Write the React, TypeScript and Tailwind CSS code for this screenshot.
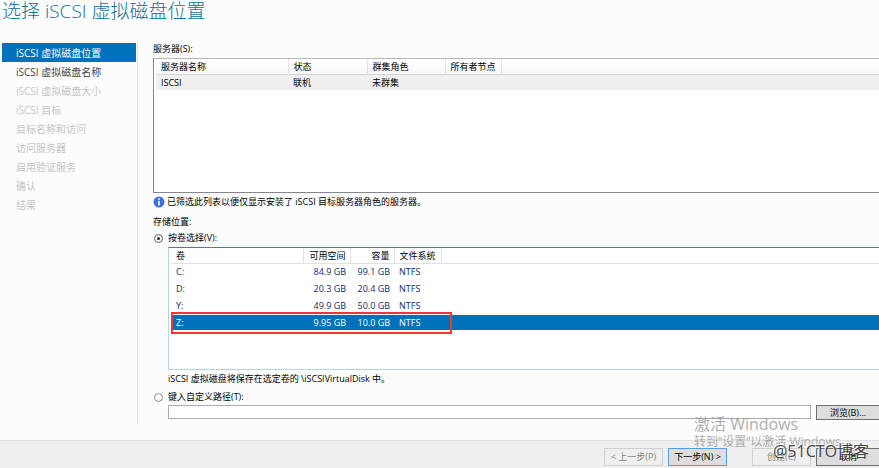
import clsx from "clsx";

interface ServerProps {
  name: string;
  status: string;
  role: string;
  owner: string;
}

interface VolumeProps {
  name: string;
  free: string;
  capacity: string;
  fileSystem: string;
}

const steps: string[] = [
  "iSCSI 虚拟磁盘位置",
  "iSCSI 虚拟磁盘名称",
  "iSCSI 虚拟磁盘大小",
  "iSCSI 目标",
  "目标名称和访问",
  "访问服务器",
  "启用验证服务",
  "确认",
  "结果",
];

const servers: ServerProps[] = [
  { name: "ISCSI", status: "联机", role: "未群集", owner: "" },
];

const volumes: VolumeProps[] = [
  { name: "C:", free: "84.9 GB", capacity: "99.1 GB", fileSystem: "NTFS" },
  { name: "D:", free: "20.3 GB", capacity: "20.4 GB", fileSystem: "NTFS" },
  { name: "Y:", free: "49.9 GB", capacity: "50.0 GB", fileSystem: "NTFS" },
  { name: "Z:", free: "9.95 GB", capacity: "10.0 GB", fileSystem: "NTFS" },
];

const Steps = () => (
  <nav className="w-[138px] shrink-0 border-r border-[#e2e2e2] pl-0.5 text-[10px]">
    <ol>
      {steps.map((step, index) => (
        <li
          key={step}
          aria-current={index === 0 ? "step" : undefined}
          className={clsx(
            "mr-px pt-px pl-3.5 leading-[18px]",
            index === 0 && "bg-[#0072bc] text-white",
            index === 1 && "text-[#444444]",
            index > 1 && "text-[#c4c4c4]",
          )}
        >
          {step}
        </li>
      ))}
    </ol>
  </nav>
);

const ServerTable = () => (
  <div className="h-[135px] border border-r-0 border-[#828790] border-t-[#b5b8c0] bg-white pl-0.5">
    <table
      aria-labelledby="servers"
      className="w-full table-fixed border-collapse text-left leading-[15px]"
    >
      <colgroup>
        <col className="w-[132px]" />
        <col className="w-[79px]" />
        <col className="w-[78px]" />
        <col className="w-[56px]" />
        <col />
      </colgroup>
      <thead>
        <tr className="border-b border-[#d5d5d5] bg-linear-to-b from-white to-[#f7f7f7]">
          {["服务器名称", "状态", "群集角色", "所有者节点"].map((title) => (
            <th
              key={title}
              className="border-r border-[#e2e2e2] p-0 pl-[5px] font-normal"
            >
              {title}
            </th>
          ))}
          <td />
        </tr>
      </thead>
      <tbody>
        {servers.map(({ name, status, role, owner }: ServerProps) => (
          <tr key={name} className="bg-[#efefef]">
            <td className="p-0 pl-[5px]">{name}</td>
            <td className="p-0 pl-[5px]">{status}</td>
            <td className="p-0 pl-[5px]">{role}</td>
            <td className="p-0 pl-[5px]">{owner}</td>
            <td />
          </tr>
        ))}
      </tbody>
    </table>
  </div>
);

const VolumeTable = () => (
  <div className="relative h-[123px] border border-r-0 border-[#b8d3e6] border-t-[#3f7fb1] bg-white pl-0.5">
    <table
      aria-labelledby="volumes"
      className="w-full table-fixed border-collapse text-left leading-[15px]"
    >
      <colgroup>
        <col className="w-[132px]" />
        <col className="w-[47px]" />
        <col className="w-[44px]" />
        <col className="w-[47px]" />
        <col />
      </colgroup>
      <thead>
        <tr className="border-b border-[#e2e2e2]">
          <th className="border-r border-[#e2e2e2] p-0 pl-[5px] font-normal">
            卷
          </th>
          <th className="border-r border-[#e2e2e2] p-0 pr-1 text-right font-normal">
            可用空间
          </th>
          <th className="border-r border-[#e2e2e2] p-0 pr-1 text-right font-normal">
            容量
          </th>
          <th className="border-r border-[#e2e2e2] p-0 pl-[5px] font-normal">
            文件系统
          </th>
          <td />
        </tr>
      </thead>
      <tbody>
        {volumes.map(({ name, free, capacity, fileSystem }: VolumeProps) => (
          <tr
            key={name}
            className={clsx(
              "align-top",
              name === "Z:" ? "bg-[#0072bc] text-white" : "h-[17px] text-[#14286e]",
            )}
          >
            <td className="p-0 pl-[5px]">{name}</td>
            <td className="p-0 pr-1 text-right">{free}</td>
            <td className="p-0 pr-1 text-right">{capacity}</td>
            <td className="p-0 pl-[5px]">{fileSystem}</td>
            <td />
          </tr>
        ))}
      </tbody>
    </table>
    {/* marker round the selected volume */}
    <div className="absolute top-16 left-0.5 h-[22px] w-[281px] border-2 border-[#f03535]" />
  </div>
);

const radio =
  "size-[9px] shrink-0 appearance-none rounded-full border border-[#8a8a8a] bg-white checked:bg-[#222222] checked:shadow-[inset_0_0_0_2px_white]";

const button = "h-[18px] w-[59px] shrink-0 border whitespace-nowrap";

export default function App() {
  return (
    <div className="relative flex min-h-screen flex-col overflow-hidden bg-[#fcfcfc] font-['Open_Sans','Noto_Sans_CJK_SC',sans-serif] text-[9px] text-black">
      <h1 className="mb-5 pl-0.5 text-[19px] leading-[23px] font-light text-[#0f6f95]">
        选择 iSCSI 虚拟磁盘位置
      </h1>

      <div className="flex grow pb-4">
        <Steps />

        <main className="min-w-0 grow pl-[15px]">
          <h2 id="servers" className="mb-[3px] leading-3">
            服务器(S):
          </h2>
          <ServerTable />

          <p className="mt-px flex items-center gap-0.5 leading-4">
            <svg viewBox="0 0 12 12" className="size-3 shrink-0">
              <circle cx="6" cy="6" r="5.5" fill="#3f6fd8" />
              <rect x="5.2" y="2.3" width="1.6" height="1.6" fill="white" />
              <rect x="5.2" y="4.8" width="1.6" height="4.6" fill="white" />
            </svg>
            已筛选此列表以便仅显示安装了 iSCSI 目标服务器角色的服务器。
          </p>

          <h2 id="volumes" className="mt-1 leading-4">
            存储位置:
          </h2>
          <label className="flex items-center gap-[5px] pl-px leading-4">
            <input type="radio" name="location" defaultChecked className={radio} />
            按卷选择(V):
          </label>
          <div className="mt-px pl-[15px]">
            <VolumeTable />
            <p className="mt-px leading-4">
              iSCSI 虚拟磁盘将保存在选定卷的 \iSCSIVirtualDisk 中。
            </p>
          </div>

          <label className="mt-0.5 flex items-center gap-[5px] pl-px leading-4">
            <input type="radio" name="location" className={radio} />
            键入自定义路径(T):
          </label>
          <div className="flex gap-[5px] pl-[15px]">
            <input
              type="text"
              aria-label="自定义路径"
              className="h-3.5 min-w-0 grow border border-[#ababb2] bg-white px-1"
            />
            <button
              type="button"
              className="h-[15px] w-[63px] shrink-0 border border-r-0 border-[#707070] bg-[#dddddd] leading-3"
            >
              浏览(B)...
            </button>
          </div>
        </main>
      </div>

      <footer className="flex h-7 justify-end gap-[5px] border-t border-[#e0e0e0] bg-[#efefef] pt-[7px]">
        <button
          type="button"
          disabled
          className={clsx(button, "border-[#cfcfcf] text-[#838383]")}
        >
          &lt; 上一步(P)
        </button>
        <button
          type="button"
          className={clsx(button, "mr-5 border-[#569de5] bg-[#dddddd]")}
        >
          下一步(N) &gt;
        </button>
        <button
          type="button"
          disabled
          className={clsx(button, "border-[#cfcfcf] text-[#838383]")}
        >
          创建(C)
        </button>
        <button
          type="button"
          className="h-[18px] w-[63px] shrink-0 border border-r-0 border-[#707070] bg-[#dddddd]"
        >
          取消
        </button>
      </footer>

      <div className="pointer-events-none absolute right-0 bottom-[18px] w-[185px] text-[#8a8a8a]/70">
        <p className="text-[16px] leading-[20px]">激活 Windows</p>
        <p className="text-[12px] leading-[16px]">
          转到“设置”以激活 Windows。
        </p>
      </div>
      <p className="pointer-events-none absolute right-2.5 bottom-1.5 text-[16px] leading-[22px] text-[#444444] [text-shadow:-1px_-1px_0_white]">
        @51CTO博客
      </p>
    </div>
  );
}
